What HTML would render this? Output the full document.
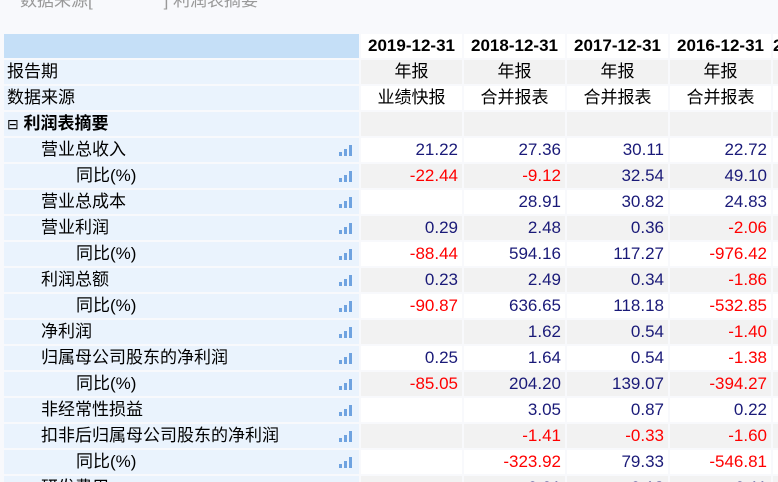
<!DOCTYPE html>
<html><head><meta charset="utf-8"><style>
body{margin:0;width:778px;height:482px;overflow:hidden;background:#f8f9fc;font-family:"Liberation Sans","Noto Sans CJK SC",sans-serif}
#w{position:relative;width:778px;height:482px;overflow:hidden}
table{position:absolute;left:2px;top:32px;width:874px;border-collapse:separate;border-spacing:2px;table-layout:fixed;font-size:17px}
td{height:24px;padding:0;white-space:nowrap;overflow:hidden;line-height:24px}
td.l{background:#eaf3fd;color:#000;position:relative}
td.v{text-align:right;padding-right:4px;box-sizing:border-box;color:#1a1a78}
tr.g td.v{background:#f2f2f2}
tr:not(.g) td.v{background:#fff}
tr.h td{background:#c5dff7;font-weight:bold;text-align:center;padding:0;color:#000}
tr.c td.v{text-align:center;padding:0;color:#000}
.r{color:#f00!important}
.i1{padding-left:37px}.i2{padding-left:72px}.i0{padding-left:3px}
.ic{position:absolute;right:7px;top:7px;width:13px;height:11px}
.ic i{position:absolute;bottom:0;width:3px;background:#6fa3e0}
</style></head><body><div id="w">
<div style="position:absolute;left:20px;top:-14px;color:#999;font-size:17px;white-space:nowrap">数据来源[ &nbsp; &nbsp; &nbsp; &nbsp; &nbsp; &nbsp; &nbsp; ] 利润表摘要</div>
<table>
<colgroup><col style="width:355px"><col style="width:101px"><col style="width:101px"><col style="width:101px"><col style="width:101px"><col style="width:101px"></colgroup>
<tr class="h"><td class="l" style="background:#c5dff7"></td><td class="v">2019-12-31</td><td class="v">2018-12-31</td><td class="v">2017-12-31</td><td class="v">2016-12-31</td><td class="v" style="text-align:left">2015-12-31</td></tr>
<tr class="g c"><td class="l i0">报告期</td><td class="v">年报</td><td class="v">年报</td><td class="v">年报</td><td class="v">年报</td><td class="v"></td></tr>
<tr class="c"><td class="l i0">数据来源</td><td class="v">业绩快报</td><td class="v">合并报表</td><td class="v">合并报表</td><td class="v">合并报表</td><td class="v"></td></tr>
<tr class="g"><td class="l i0" style="font-weight:bold"><span style="font-weight:normal;font-size:14px">⊟</span> 利润表摘要</td><td class="v"></td><td class="v"></td><td class="v"></td><td class="v"></td><td class="v"></td></tr>
<tr><td class="l i1">营业总收入<span class="ic"><i style="left:0;height:4px"></i><i style="left:5px;height:7px"></i><i style="left:10px;height:11px"></i></span></td><td class="v">21.22</td><td class="v">27.36</td><td class="v">30.11</td><td class="v">22.72</td><td class="v"></td></tr>
<tr class="g"><td class="l i2">同比(%)<span class="ic"><i style="left:0;height:4px"></i><i style="left:5px;height:7px"></i><i style="left:10px;height:11px"></i></span></td><td class="v r">-22.44</td><td class="v r">-9.12</td><td class="v">32.54</td><td class="v">49.10</td><td class="v"></td></tr>
<tr><td class="l i1">营业总成本<span class="ic"><i style="left:0;height:4px"></i><i style="left:5px;height:7px"></i><i style="left:10px;height:11px"></i></span></td><td class="v"></td><td class="v">28.91</td><td class="v">30.82</td><td class="v">24.83</td><td class="v"></td></tr>
<tr class="g"><td class="l i1">营业利润<span class="ic"><i style="left:0;height:4px"></i><i style="left:5px;height:7px"></i><i style="left:10px;height:11px"></i></span></td><td class="v">0.29</td><td class="v">2.48</td><td class="v">0.36</td><td class="v r">-2.06</td><td class="v"></td></tr>
<tr><td class="l i2">同比(%)<span class="ic"><i style="left:0;height:4px"></i><i style="left:5px;height:7px"></i><i style="left:10px;height:11px"></i></span></td><td class="v r">-88.44</td><td class="v">594.16</td><td class="v">117.27</td><td class="v r">-976.42</td><td class="v"></td></tr>
<tr class="g"><td class="l i1">利润总额<span class="ic"><i style="left:0;height:4px"></i><i style="left:5px;height:7px"></i><i style="left:10px;height:11px"></i></span></td><td class="v">0.23</td><td class="v">2.49</td><td class="v">0.34</td><td class="v r">-1.86</td><td class="v"></td></tr>
<tr><td class="l i2">同比(%)<span class="ic"><i style="left:0;height:4px"></i><i style="left:5px;height:7px"></i><i style="left:10px;height:11px"></i></span></td><td class="v r">-90.87</td><td class="v">636.65</td><td class="v">118.18</td><td class="v r">-532.85</td><td class="v"></td></tr>
<tr class="g"><td class="l i1">净利润<span class="ic"><i style="left:0;height:4px"></i><i style="left:5px;height:7px"></i><i style="left:10px;height:11px"></i></span></td><td class="v"></td><td class="v">1.62</td><td class="v">0.54</td><td class="v r">-1.40</td><td class="v"></td></tr>
<tr><td class="l i1">归属母公司股东的净利润<span class="ic"><i style="left:0;height:4px"></i><i style="left:5px;height:7px"></i><i style="left:10px;height:11px"></i></span></td><td class="v">0.25</td><td class="v">1.64</td><td class="v">0.54</td><td class="v r">-1.38</td><td class="v"></td></tr>
<tr class="g"><td class="l i2">同比(%)<span class="ic"><i style="left:0;height:4px"></i><i style="left:5px;height:7px"></i><i style="left:10px;height:11px"></i></span></td><td class="v r">-85.05</td><td class="v">204.20</td><td class="v">139.07</td><td class="v r">-394.27</td><td class="v"></td></tr>
<tr><td class="l i1">非经常性损益<span class="ic"><i style="left:0;height:4px"></i><i style="left:5px;height:7px"></i><i style="left:10px;height:11px"></i></span></td><td class="v"></td><td class="v">3.05</td><td class="v">0.87</td><td class="v">0.22</td><td class="v"></td></tr>
<tr class="g"><td class="l i1">扣非后归属母公司股东的净利润<span class="ic"><i style="left:0;height:4px"></i><i style="left:5px;height:7px"></i><i style="left:10px;height:11px"></i></span></td><td class="v"></td><td class="v r">-1.41</td><td class="v r">-0.33</td><td class="v r">-1.60</td><td class="v"></td></tr>
<tr><td class="l i2">同比(%)<span class="ic"><i style="left:0;height:4px"></i><i style="left:5px;height:7px"></i><i style="left:10px;height:11px"></i></span></td><td class="v"></td><td class="v r">-323.92</td><td class="v">79.33</td><td class="v r">-546.81</td><td class="v"></td></tr>
<tr class="g"><td class="l i1">研发费用</td><td class="v"></td><td class="v">0.01</td><td class="v">0.13</td><td class="v">0.11</td><td class="v"></td></tr>
</table>
</div></body></html>
